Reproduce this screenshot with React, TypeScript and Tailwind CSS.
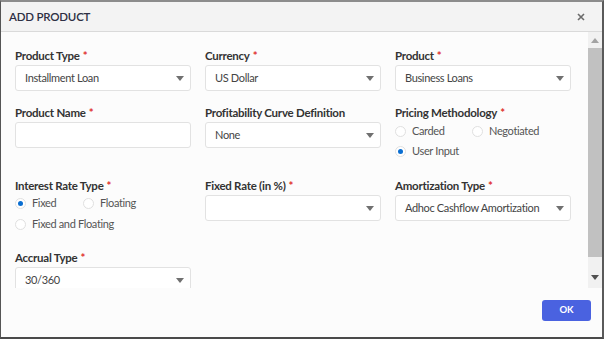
import React from "react";

function Label({ text, required }: { text: string; required?: boolean }) {
  return (
    <div className="h-4 pt-px text-[11.5px] leading-4 font-bold tracking-[-0.25px] text-[#333]">
      {text}
      {required && <span className="ml-[3px] text-[#e0312e]">*</span>}
    </div>
  );
}

function Caret() {
  return (
    <svg width="8" height="5" viewBox="0 0 8 5" className="shrink-0">
      <path d="M0 0 L8 0 L4 5 Z" fill="#707070" />
    </svg>
  );
}

function Select({ value }: { value?: string }) {
  return (
    <div className="mt-[2px] flex h-[26px] items-center justify-between rounded-[3px] border border-[#e2e2e2] bg-white pr-[6px] pl-[9px] text-[11px] tracking-[-0.35px] text-[#444]">
      <span className="whitespace-nowrap">{value}</span>
      <Caret />
    </div>
  );
}

function TextInput() {
  return (
    <div className="mt-[2px] h-[26px] rounded-[3px] border border-[#e2e2e2] bg-white" />
  );
}

function Radio({ label, checked }: { label: string; checked?: boolean }) {
  return (
    <label className="flex h-5 items-center gap-[6px] text-[11px] tracking-[-0.35px] text-[#555]">
      <span className="flex h-[11px] w-[11px] items-center justify-center rounded-full border border-[#e0e0e0] bg-white">
        {checked && <span className="h-[5px] w-[5px] rounded-full bg-[#0a6ed1]" />}
      </span>
      {label}
    </label>
  );
}

export default function App() {
  return (
    <div
      className="flex h-[339px] w-[604px] flex-col overflow-hidden border-t-2 border-r-2 border-b-2 border-l border-t-[#8c8c8c] border-r-[#5a5a5a] border-b-[#4a4a4a] border-l-[#555] bg-[#fcfcfc]"
      style={{ fontFamily: 'Lato, "Open Sans", sans-serif' }}
    >
      <div className="flex h-[30px] shrink-0 items-center justify-between border-b border-[#dadada] bg-[#f3f3f3] pr-[17px] pl-[8px]">
        <span className="text-[11.5px] font-semibold tracking-[-0.2px] text-[#2d2f44]">ADD PRODUCT</span>
        <svg width="8" height="8" viewBox="0 0 8 8">
          <path d="M1 1 L7 7 M7 1 L1 7" stroke="#6b6b6b" strokeWidth="1.6" />
        </svg>
      </div>

      <div className="flex h-[256px] shrink-0">
        <div className="flex-1 overflow-hidden pt-[15px] pl-[14px]">
          <div className="grid w-[556px] grid-cols-3 gap-x-[14px] gap-y-[13px]">
            <div>
              <Label text="Product Type" required />
              <Select value="Installment Loan" />
            </div>
            <div>
              <Label text="Currency" required />
              <Select value="US Dollar" />
            </div>
            <div>
              <Label text="Product" required />
              <Select value="Business Loans" />
            </div>

            <div>
              <Label text="Product Name" required />
              <TextInput />
            </div>
            <div>
              <Label text="Profitability Curve Definition" />
              <Select value="None" />
            </div>
            <div className="pb-[3px]">
              <Label text="Pricing Methodology" required />
              <div className="mt-px flex">
                <div className="w-[77px]">
                  <Radio label="Carded" />
                </div>
                <Radio label="Negotiated" />
              </div>
              <Radio label="User Input" checked />
            </div>

            <div className="pb-[2px]">
              <Label text="Interest Rate Type" required />
              <div className="flex">
                <div className="w-[68px]">
                  <Radio label="Fixed" checked />
                </div>
                <Radio label="Floating" />
              </div>
              <div className="mt-px">
                <Radio label="Fixed and Floating" />
              </div>
            </div>
            <div>
              <Label text="Fixed Rate (in %)" required />
              <Select />
            </div>
            <div>
              <Label text="Amortization Type" required />
              <Select value="Adhoc Cashflow Amortization" />
            </div>

            <div>
              <Label text="Accrual Type" required />
              <Select value="30/360" />
            </div>
          </div>
        </div>

        <div className="flex w-[14px] shrink-0 flex-col items-center bg-[#f1f1f1]">
          <div className="flex h-[16px] items-center justify-center">
            <svg width="8" height="5" viewBox="0 0 8 5">
              <path d="M0 5 L8 5 L4 0 Z" fill="#a3a3a3" />
            </svg>
          </div>
          <div className="h-[209px] w-full bg-[#c1c1c1]" />
          <div className="flex flex-1 items-end justify-center pb-[8px]">
            <svg width="8" height="5" viewBox="0 0 8 5">
              <path d="M0 0 L8 0 L4 5 Z" fill="#505050" />
            </svg>
          </div>
        </div>
      </div>

      <div className="flex flex-1 items-start justify-end pt-[12px] pr-[11px]">
        <button className="h-[21px] w-[49px] rounded-[3px] bg-[#4a62e0] text-[9.5px] font-bold text-white">
          OK
        </button>
      </div>
    </div>
  );
}
